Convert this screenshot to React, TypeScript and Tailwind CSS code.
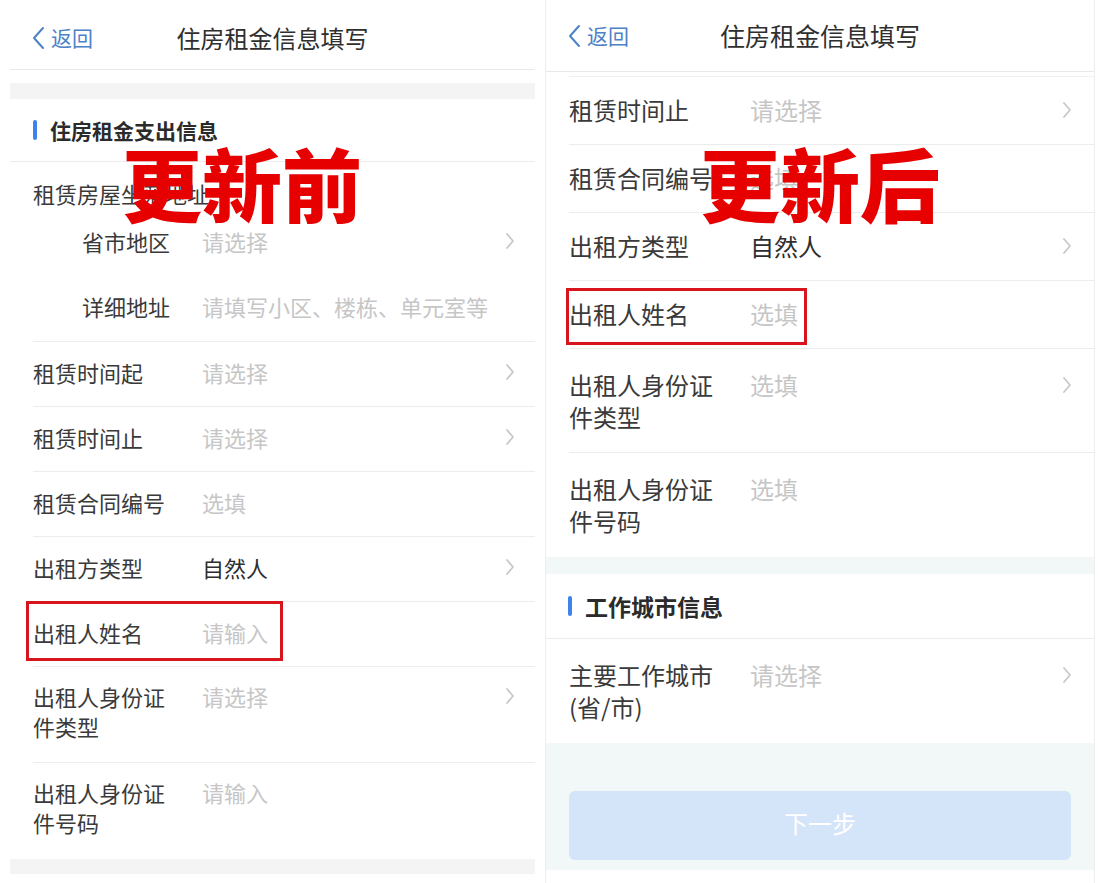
import React from 'react';

const FONT = { fontFamily: '"Noto Sans CJK SC", "Noto Sans", sans-serif' };

function Chevron({ className = '' }: { className?: string }) {
    return (
        <svg className={className} width="10" height="18" viewBox="0 0 10 18" fill="none">
            <polyline points="2,2 8,9 2,16" stroke="#c8c8c8" strokeWidth="1.8" strokeLinecap="round" strokeLinejoin="round" />
        </svg>
    );
}

function BackButton() {
    return (
        <div className="flex items-center gap-[6px] text-[#4d82c6]">
            <svg width="13" height="24" viewBox="0 0 13 24" fill="none">
                <polyline points="11,2 2,12 11,22" stroke="#4d82c6" strokeWidth="2" strokeLinecap="round" strokeLinejoin="round" />
            </svg>
            <span className="text-[21px] leading-none">返回</span>
        </div>
    );
}

function Header({ height, pad, titleSize }: { height: string; pad: string; titleSize: string }) {
    return (
        <div className={`grid grid-cols-[1fr_auto_1fr] items-center border-b border-[#e9e9e9] ${height} ${pad}`}>
            <BackButton />
            <div className={`${titleSize} text-[#2f2f2f] leading-none`}>住房租金信息填写</div>
            <div />
        </div>
    );
}

type RowProps = {
    label: React.ReactNode;
    value: string;
    filled?: boolean;
    chevron?: boolean;
    twoLine?: boolean;
};

// left (before) panel row
function LeftRow({ label, value, filled, chevron, twoLine }: RowProps) {
    return (
        <div className={`ml-[23px] flex border-b border-[#ececec] pr-[20px] ${twoLine ? 'h-[96px] items-start pt-[14px]' : 'h-[65px] items-center pb-[5px]'}`}>
            <div className="w-[169px] text-[22px] leading-[30px] text-[#3a3a3a]">{label}</div>
            <div className={`flex-1 text-[22px] leading-[30px] ${filled ? 'text-[#2e2e2e]' : 'text-[#c6c6c6]'}`}>{value}</div>
            {chevron && <Chevron className={twoLine ? 'mt-[6px]' : ''} />}
        </div>
    );
}

// right (after) panel row
function RightRow({ label, value, filled, chevron, twoLine, last }: RowProps & { last?: boolean }) {
    return (
        <div className={`ml-[23px] flex pr-[22px] ${last ? '' : 'border-b border-[#ececec]'} ${twoLine ? 'h-[104px] items-start pt-[20px]' : 'h-[68px] items-center pb-[2px]'}`}>
            <div className="w-[181px] text-[24px] leading-[32px] text-[#3a3a3a]">{label}</div>
            <div className={`flex-1 text-[24px] leading-[32px] ${filled ? 'text-[#2e2e2e]' : 'text-[#c6c6c6]'}`}>{value}</div>
            {chevron && <Chevron className={twoLine ? 'mt-[7px]' : ''} />}
        </div>
    );
}

function SectionTitle({ title, size, pad, height }: { title: string; size: string; pad: string; height: string }) {
    return (
        <div className={`flex items-center gap-[13px] border-b border-[#ececec] ${pad} ${height}`}>
            <div className="h-[20px] w-[4px] rounded-full bg-[#3f82ea]" />
            <div className={`${size} font-bold leading-none text-[#2b2b2b]`}>{title}</div>
        </div>
    );
}

function BeforePanel() {
    return (
        <div className="ml-[10px] flex w-[525px] flex-col bg-white">
            <Header height="h-[70px] pt-[6px]" pad="pl-[22px] pr-[22px]" titleSize="text-[24px]" />
            <div className="mt-[13px] h-[16px] bg-[#f4f4f4]" />
            <SectionTitle title="住房租金支出信息" size="text-[21px]" pad="pl-[23px]" height="h-[63px]" />

            <div className="ml-[23px] border-b border-[#ececec]">
                <div className="flex h-[49px] items-end pb-[3px] text-[22px] leading-[30px] text-[#3a3a3a]">租赁房屋坐落地址</div>
                <div className="flex h-[65px] items-center pb-[5px] pr-[20px]">
                    <div className="w-[120px] pl-[49px] text-[22px] leading-[30px] text-[#3a3a3a] whitespace-nowrap">省市地区</div>
                    <div className="ml-[49px] flex-1 text-[22px] leading-[30px] text-[#c6c6c6]">请选择</div>
                    <Chevron />
                </div>
                <div className="flex h-[65px] items-center pb-[5px]">
                    <div className="w-[120px] pl-[49px] text-[22px] leading-[30px] text-[#3a3a3a] whitespace-nowrap">详细地址</div>
                    <div className="ml-[49px] flex-1 text-[22px] leading-[30px] text-[#c6c6c6] whitespace-nowrap">请填写小区、楼栋、单元室等</div>
                </div>
            </div>

            <LeftRow label="租赁时间起" value="请选择" chevron />
            <LeftRow label="租赁时间止" value="请选择" chevron />
            <LeftRow label="租赁合同编号" value="选填" />
            <LeftRow label="出租方类型" value="自然人" filled chevron />
            <LeftRow label="出租人姓名" value="请输入" />
            <LeftRow label={<>出租人身份证<br />件类型</>} value="请选择" chevron twoLine />
            <div className="ml-[23px] flex h-[96px] items-start pt-[14px]">
                <div className="w-[169px] text-[22px] leading-[30px] text-[#3a3a3a]">出租人身份证<br />件号码</div>
                <div className="flex-1 text-[22px] leading-[30px] text-[#c6c6c6]">请输入</div>
            </div>
            <div className="h-[15px] bg-[#f4f4f4]" />
        </div>
    );
}

function AfterPanel() {
    return (
        <div className="ml-[10px] flex w-[550px] flex-col border-x border-[#eeeeee] bg-white">
            <Header height="h-[72px]" pad="pl-[22px] pr-[22px]" titleSize="text-[25px]" />
            <div className="ml-[23px] h-[5px] border-b border-[#f0f0f0]" />
            <RightRow label="租赁时间止" value="请选择" chevron />
            <RightRow label="租赁合同编号" value="选填" />
            <RightRow label="出租方类型" value="自然人" filled chevron />
            <RightRow label="出租人姓名" value="选填" />
            <RightRow label={<>出租人身份证<br />件类型</>} value="选填" chevron twoLine />
            <RightRow label={<>出租人身份证<br />件号码</>} value="选填" twoLine last />
            <div className="h-[17px] bg-[#f2f7f7]" />
            <SectionTitle title="工作城市信息" size="text-[23px]" pad="pl-[22px]" height="h-[65px]" />
            <RightRow label={<>主要工作城市<br />(省/市)</>} value="请选择" chevron twoLine last />
            <div className="h-[127px] bg-[#f2f7f7] px-[23px] pt-[48px]">
                <div className="flex h-[69px] items-center justify-center rounded-[6px] bg-[#d4e5f9] pb-[6px] text-[24px] text-white">
                    下一步
                </div>
            </div>
        </div>
    );
}

export default function App() {
    return (
        <div className="relative flex h-[883px] w-[1105px] overflow-hidden bg-white" style={FONT}>
            <BeforePanel />
            <AfterPanel />

            {/* annotations drawn over the screenshots */}
            <div className="absolute left-[26px] top-[601px] h-[60px] w-[257px] border-[3px] border-[#d8141c]" />
            <div className="absolute left-[566px] top-[288px] h-[57px] w-[241px] border-[3px] border-[#d8141c]" />
            <div className="absolute left-[122px] top-[141px] text-[80px] font-black leading-none text-[#e60000]">更新前</div>
            <div className="absolute left-[700px] top-[141px] text-[80px] font-black leading-none text-[#e60000]">更新后</div>
        </div>
    );
}
